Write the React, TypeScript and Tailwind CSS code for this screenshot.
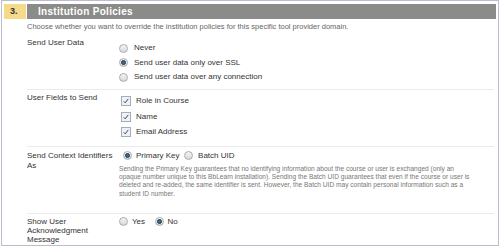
import type { ReactNode } from "react";

const Radio = ({ on = false }: { on?: boolean }) => (
  <span className="inline-flex h-[9px] w-[9px] shrink-0 items-center justify-center rounded-full border border-[#a9acb0] bg-gradient-to-b from-[#f4f4f4] to-[#d9d9d9]">
    {on && <span className="h-[5px] w-[5px] rounded-full border border-[#1f3d55] bg-[#3d6888]" />}
  </span>
);

const Check = () => (
  <span className="inline-flex h-[10px] w-[10px] shrink-0 items-center justify-center border border-[#a3adbd] bg-[#eef1f6]">
    <svg viewBox="0 0 10 10" className="h-[8px] w-[8px]">
      <path d="M2.2 5.4 L4 7.3 L7.8 2.4" fill="none" stroke="#3a3f48" strokeWidth="1.2" />
    </svg>
  </span>
);

const Row = ({
  label,
  children,
  className,
  last = false,
}: {
  label: ReactNode;
  children: ReactNode;
  className: string;
  last?: boolean;
}) => (
  <div className={`flex ${last ? "" : "border-b border-[#ebebeb]"} ${className}`}>
    <div className={`w-[92px] shrink-0 text-[#333] ${last ? "leading-[9px]" : "leading-[9.5px]"}`}>{label}</div>
    <div className="flex-1">{children}</div>
  </div>
);

export default function App() {
  return (
    <div className="bg-white font-['Liberation_Sans',Arial,sans-serif]">
      <div className="ml-px h-[246px] w-[498px] border border-[#b9bdcc] px-[2px] pt-[3px]">
        {/* Header */}
        <div className="flex h-[15px] gap-px">
          <div className="flex w-[22px] items-center bg-[#f5da8a] pl-[6px] text-[9px] font-bold text-[#333]">
            3.
          </div>
          <div className="flex flex-1 items-center bg-[#8b8b89] pl-[11px] text-[10px] font-bold tracking-[0.3px] text-white">
            Institution Policies
          </div>
        </div>

        <div className="pl-[23px] pr-[2px] text-[8px]">
          <p className="mt-[3px] text-[7.5px] leading-[10px] text-[#666]">
            Choose whether you want to override the institution policies for this specific tool provider domain.
          </p>

          <Row label="Send User Data" className="pt-[6px] pb-[4px]">
            <div className="pt-[3px]">
              {[
                ["Never", false],
                ["Send user data only over SSL", true],
                ["Send user data over any connection", false],
              ].map(([t, on]) => (
                <div key={t as string} className="flex h-[14.5px] items-center gap-[6px] text-[#333]">
                  <Radio on={on as boolean} />
                  <span>{t}</span>
                </div>
              ))}
            </div>
          </Row>

          <Row label="User Fields to Send" className="pt-[3px] pb-[6px]">
            <div className="pt-[1px] pl-[2px]">
              {["Role in Course", "Name", "Email Address"].map((t) => (
                <div key={t} className="flex h-[15.5px] items-center gap-[5px] text-[#333]">
                  <Check />
                  <span>{t}</span>
                </div>
              ))}
            </div>
          </Row>

          <Row
            label={
              <>
                Send Context Identifiers
                <br />
                As
              </>
            }
            className="pt-[4px] pb-[15px]"
          >
            <div className="flex h-[9.5px] items-center text-[#333]">
              <span className="ml-[4px] flex">
                <Radio on />
              </span>
              <span className="ml-[4px]">Primary Key</span>
              <span className="ml-[4.5px] flex">
                <Radio />
              </span>
              <span className="ml-[5px]">Batch UID</span>
            </div>
            <p className="mt-[4px] text-[6.6px] leading-[8.4px] text-[#777]">
              Sending the Primary Key guarantees that no identifying information about the course or user is exchanged (only an
              <br />
              opaque number unique to this BbLearn installation). Sending the Batch UID guarantees that even if the course or user is
              <br />
              deleted and re-added, the same identifier is sent. However, the Batch UID may contain personal information such as a
              <br />
              student ID number.
            </p>
          </Row>

          <Row
            last
            label={
              <>
                Show User
                <br />
                Acknowledgment
                <br />
                Message
              </>
            }
            className="pt-[3px]"
          >
            <div className="flex h-[9.5px] items-center text-[#333]">
              <span className="flex">
                <Radio />
              </span>
              <span className="ml-[4px]">Yes</span>
              <span className="ml-[9.5px] flex">
                <Radio on />
              </span>
              <span className="ml-[4px]">No</span>
            </div>
          </Row>
        </div>
      </div>
    </div>
  );
}
